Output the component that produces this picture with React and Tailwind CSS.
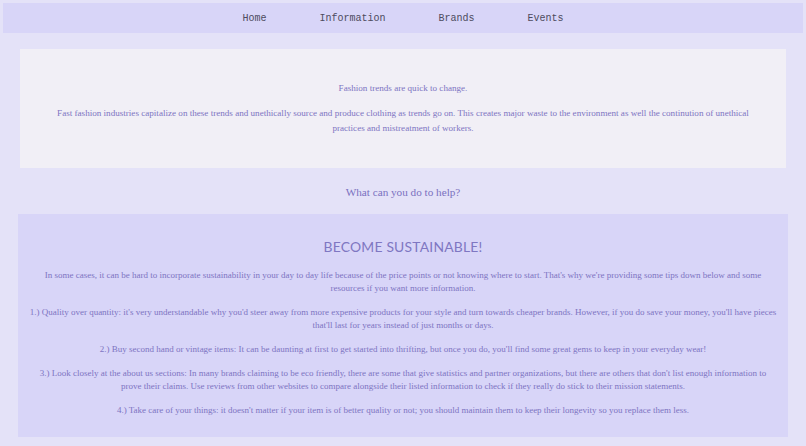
const serif = { fontFamily: '"Liberation Serif", "DejaVu Serif", serif' };

const tips = [
  <>In some cases, it can be hard to incorporate sustainability in your day to day life because of the price points or not knowing where to start. That's why we're providing some tips down below and some<br />resources if you want more information.</>,
  <>1.) Quality over quantity: it's very understandable why you'd steer away from more expensive products for your style and turn towards cheaper brands. However, if you do save your money, you'll have pieces<br />that'll last for years instead of just months or days.</>,
  <>2.) Buy second hand or vintage items: It can be daunting at first to get started into thrifting, but once you do, you'll find some great gems to keep in your everyday wear!</>,
  <>3.) Look closely at the about us sections: In many brands claiming to be eco friendly, there are some that give statistics and partner organizations, but there are others that don't list enough information to<br />prove their claims. Use reviews from other websites to compare alongside their listed information to check if they really do stick to their mission statements.</>,
  <>4.) Take care of your things: it doesn't matter if your item is of better quality or not; you should maintain them to keep their longevity so you replace them less.</>,
];

export default function App() {
  return (
    <div className="min-h-screen bg-[#e4e2f8] pt-[3px]">
      {/* Nav */}
      <nav className="mx-[3px] h-[30px] bg-[#d8d5f8] flex items-center justify-center gap-[53px] pt-[2px] font-['Liberation_Mono',monospace] text-[10px] text-[#4d4b5e]">
        {["Home", "Information", "Brands", "Events"].map((n) => (
          <a key={n} href="#" className="leading-none">{n}</a>
        ))}
      </nav>

      {/* Intro */}
      <section className="mx-[20px] mt-[16px] h-[119px] bg-[#f1eff6] px-[12px] pt-[32px] text-center text-[9.1px] leading-[15px] text-[#7d74c2]" style={serif}>
        <p>Fashion trends are quick to change.</p>
        <p className="mt-[10px]">
          Fast fashion industries capitalize on these trends and unethically source and produce clothing as trends go on. This creates major waste to the environment as well the continution of unethical<br />
          practices and mistreatment of workers.
        </p>
      </section>

      <h2 className="pt-[17px] pb-[15px] text-center text-[11.2px] leading-[14px] text-[#7a71c0]" style={serif}>
        What can you do to help?
      </h2>

      {/* Tips */}
      <section className="mx-[18px] h-[223px] bg-[#d8d5f8] px-[8px] pt-[24px] text-center text-[#7d74c2]">
        <h1 className="font-['Lato',sans-serif] text-[13.9px] leading-[18px] tracking-[0.2px] text-[#7f77c2]">BECOME SUSTAINABLE!</h1>
        <div className="mt-[12.5px] flex flex-col gap-[11px] text-[9px] leading-[13px]" style={serif}>
          {tips.map((t, i) => (
            <p key={i}>{t}</p>
          ))}
        </div>
      </section>
    </div>
  );
}
